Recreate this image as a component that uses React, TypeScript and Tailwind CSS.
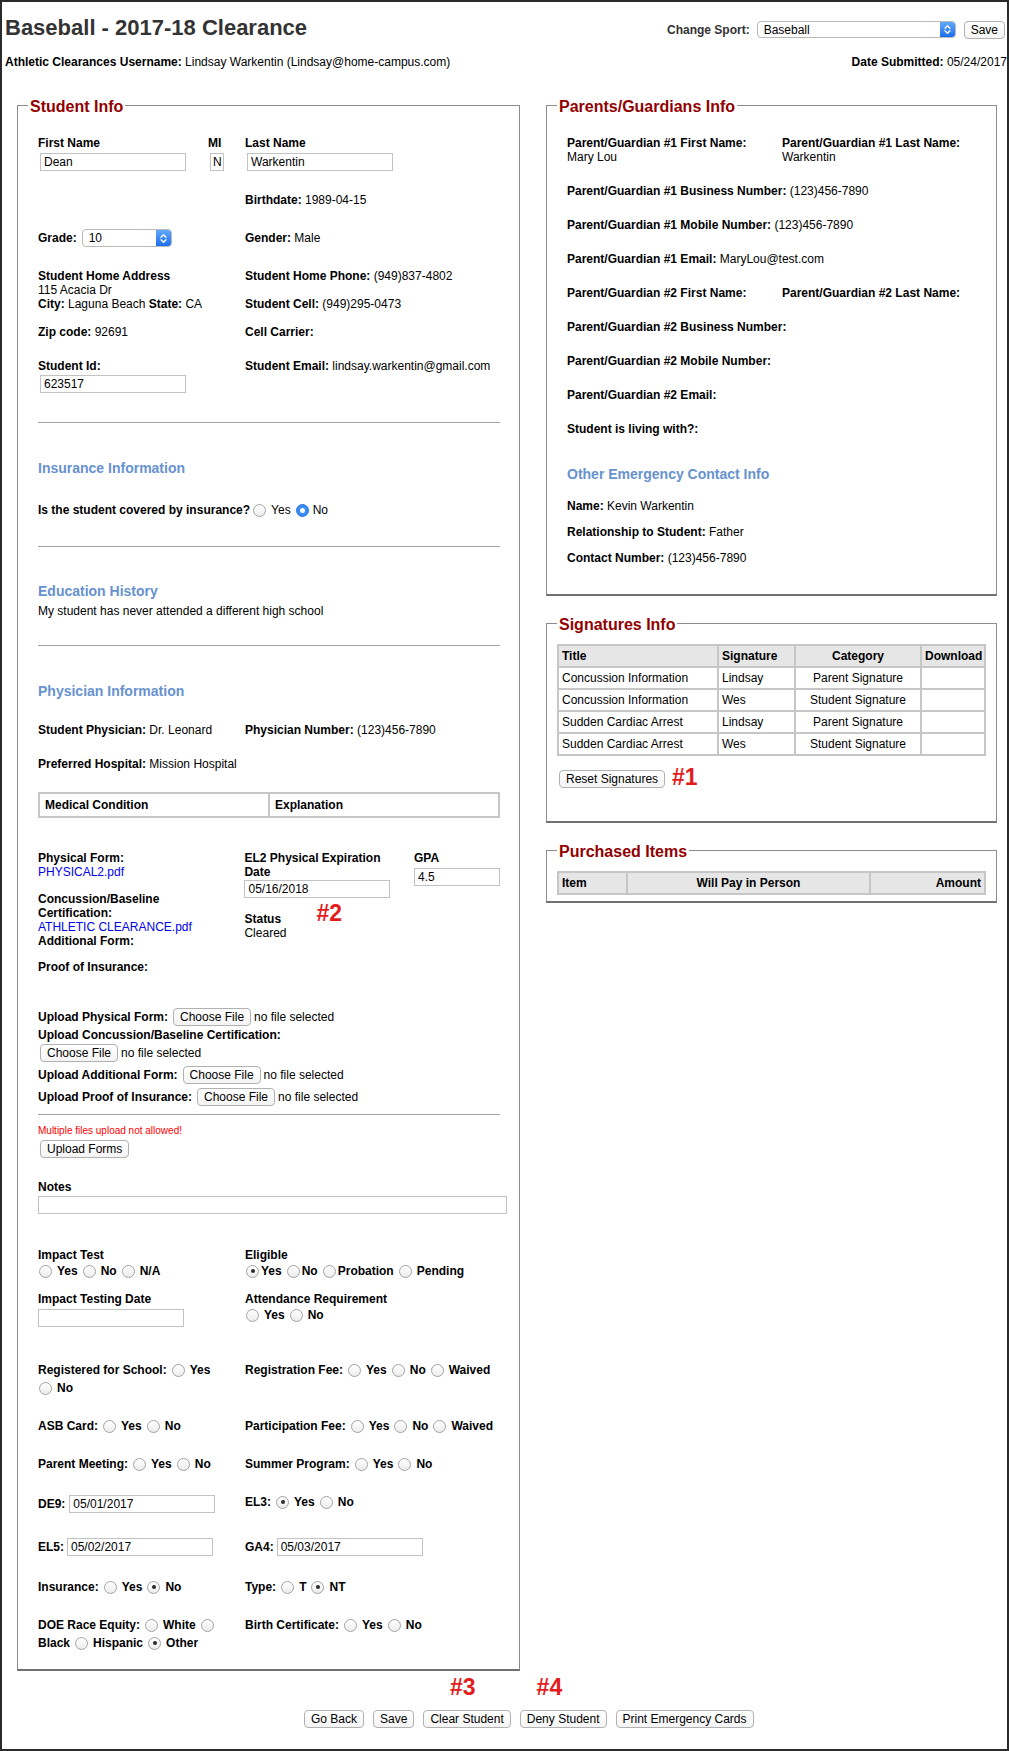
import React from "react";

type RadioProps = { checked?: boolean; blue?: boolean; className?: string };

function Radio({ checked = false, blue = false, className = "" }: RadioProps) {
  if (checked && blue) {
    return (
      <span
        className={`inline-flex items-center justify-center w-[13px] h-[13px] rounded-full bg-[#3b8bf5] border border-[#2a77e0] shrink-0 ${className}`}
      >
        <span className="w-[5px] h-[5px] rounded-full bg-white" />
      </span>
    );
  }
  return (
    <span
      className={`inline-flex items-center justify-center w-[13px] h-[13px] rounded-full border border-[#a3a3a3] bg-gradient-to-b from-white to-[#ececec] shrink-0 ${className}`}
    >
      {checked && <span className="w-[4px] h-[4px] rounded-full bg-[#2a2a2a]" />}
    </span>
  );
}

function Opt({
  label,
  checked = false,
  blue = false,
  rc = "ml-[5px] mr-[5px]",
}: {
  label: string;
  checked?: boolean;
  blue?: boolean;
  rc?: string;
}) {
  return (
    <span className="inline-flex items-center">
      <Radio checked={checked} blue={blue} className={rc} />
      {label}
    </span>
  );
}

function TextInput({
  value = "",
  className = "",
  pad = "pl-[3px]",
}: {
  value?: string;
  className?: string;
  pad?: string;
}) {
  return (
    <input
      readOnly
      value={value}
      className={`block h-[18px] border border-[#c2c2c2] bg-white text-[12px] leading-[14px] text-black outline-none ${pad} ${className}`}
    />
  );
}

function Btn({ children, className = "" }: { children: React.ReactNode; className?: string }) {
  return (
    <button
      type="button"
      className={`inline-flex items-center justify-center h-[18px] px-[6px] border border-[#b1b1b1] rounded-[4px] bg-gradient-to-b from-white to-[#f4f4f4] text-[12px] leading-[14px] text-black whitespace-nowrap ${className}`}
    >
      {children}
    </button>
  );
}

function MacSelect({ value, className = "" }: { value: string; className?: string }) {
  return (
    <div
      className={`flex items-stretch border border-[#b9b9b9] rounded-[4px] bg-white overflow-hidden ${className}`}
    >
      <span className="flex-1 flex items-center pl-[6px] text-[12px] leading-[14px] text-black">{value}</span>
      <span className="w-[15px] flex items-center justify-center bg-gradient-to-b from-[#62a8fb] to-[#1a6ded]">
        <svg width="7" height="11" viewBox="0 0 7 11">
          <path
            d="M1 4.2 L3.5 1.7 L6 4.2 M1 6.8 L3.5 9.3 L6 6.8"
            stroke="white"
            strokeWidth="1.3"
            fill="none"
            strokeLinecap="round"
            strokeLinejoin="round"
          />
        </svg>
      </span>
    </div>
  );
}

function Fieldset({
  title,
  className = "",
  legendClass = "",
  children,
}: {
  title: string;
  className?: string;
  legendClass?: string;
  children: React.ReactNode;
}) {
  return (
    <fieldset
      className={`border border-[#8c8c8c] border-b-2 border-b-[#707070] min-w-0 ${className}`}
    >
      <legend
        className={`px-[2px] pt-[4px] text-[16px] leading-[18px] font-bold text-[#920000] ${legendClass}`}
      >
        {title}
      </legend>
      {children}
    </fieldset>
  );
}

function Heading({ children, className = "" }: { children: React.ReactNode; className?: string }) {
  return (
    <div className={`text-[14px] leading-[16px] font-bold text-[#6792cf] ${className}`}>{children}</div>
  );
}

function Hr({ className = "" }: { className?: string }) {
  return <hr className={`border-0 border-t border-[#a3a3a3] ${className}`} />;
}

const Annot = "font-bold text-[23px] leading-[26px] text-[#e31d1d]";

function StudentInfo() {
  return (
    <Fieldset
      title="Student Info"
      className="w-[503px] pl-[20px] pr-[19px] pt-[20px] pb-[17px]"
      legendClass="-ml-[10px]"
    >
      <div className="flex">
        <div className="w-[170px]">
          <div className="font-bold">First Name</div>
          <TextInput value="Dean" className="mt-[3px] ml-[2px] w-[146px]" />
        </div>
        <div className="w-[37px]">
          <div className="font-bold">MI</div>
          <TextInput value="N" pad="pl-[2px] pr-0" className="mt-[3px] ml-[2px] w-[14px]" />
        </div>
        <div>
          <div className="font-bold">Last Name</div>
          <TextInput value="Warkentin" className="mt-[3px] ml-[2px] w-[146px]" />
        </div>
      </div>

      <div className="grid grid-cols-[207px_1fr] mt-[22px]">
        <div />
        <div>
          <b>Birthdate:</b> 1989-04-15
        </div>
      </div>

      <div className="grid grid-cols-[207px_1fr] mt-[22px] items-center">
        <div className="flex items-center">
          <b>Grade:</b>
          <MacSelect value="10" className="ml-[5px] w-[90px] h-[18px]" />
        </div>
        <div>
          <b>Gender:</b> Male
        </div>
      </div>

      <div className="grid grid-cols-[207px_1fr] mt-[22px]">
        <div>
          <div className="font-bold">Student Home Address</div>
          <div>115 Acacia Dr</div>
          <div>
            <b>City:</b> Laguna Beach <b>State:</b> CA
          </div>
        </div>
        <div>
          <div>
            <b>Student Home Phone:</b> (949)837-4802
          </div>
          <div className="mt-[14px]">
            <b>Student Cell:</b> (949)295-0473
          </div>
        </div>
      </div>

      <div className="grid grid-cols-[207px_1fr] mt-[14px]">
        <div>
          <b>Zip code:</b> 92691
        </div>
        <div>
          <b>Cell Carrier:</b>
        </div>
      </div>

      <div className="grid grid-cols-[207px_1fr] mt-[20px]">
        <div>
          <div className="font-bold">Student Id:</div>
          <TextInput value="623517" className="mt-[2px] ml-[2px] w-[146px]" />
        </div>
        <div>
          <b>Student Email:</b> lindsay.warkentin@gmail.com
        </div>
      </div>

      <Hr className="mt-[29px]" />

      <Heading className="mt-[37px]">Insurance Information</Heading>
      <div className="flex items-center mt-[27px]">
        <b>Is the student covered by insurance?</b>
        <Radio className="ml-[3px] mr-[5px]" />
        Yes
        <Radio checked blue className="ml-[5px] mr-[4px]" />
        No
      </div>

      <Hr className="mt-[29px]" />

      <Heading className="mt-[36px]">Education History</Heading>
      <div className="mt-[5px]">My student has never attended a different high school</div>

      <Hr className="mt-[27px]" />

      <Heading className="mt-[37px]">Physician Information</Heading>
      <div className="grid grid-cols-[207px_1fr] mt-[24px]">
        <div>
          <b>Student Physician:</b> Dr. Leonard
        </div>
        <div>
          <b>Physician Number:</b> (123)456-7890
        </div>
      </div>
      <div className="mt-[20px]">
        <b>Preferred Hospital:</b> Mission Hospital
      </div>

      <table className="mt-[21px] w-[462px] border-separate border-spacing-0 border border-[#c6c6c6]">
        <tbody>
          <tr>
            <td className="w-[230px] border border-[#c6c6c6] pl-[5px] py-[4px] font-bold text-left">
              Medical Condition
            </td>
            <td className="border border-[#c6c6c6] pl-[5px] py-[4px] font-bold text-left">Explanation</td>
          </tr>
        </tbody>
      </table>

      <div className="flex mt-[33px]">
        <div className="w-[207px]">
          <div className="font-bold">Physical Form:</div>
          <div className="text-[#0000ee]">PHYSICAL2.pdf</div>
          <div className="font-bold mt-[13px]">
            Concussion/Baseline
            <br />
            Certification:
          </div>
          <div className="text-[#0000ee]">ATHLETIC CLEARANCE.pdf</div>
          <div className="font-bold">Additional Form:</div>
          <div className="font-bold mt-[12px]">Proof of Insurance:</div>
        </div>
        <div className="w-[170px]">
          <div className="font-bold">
            EL2 Physical Expiration
            <br />
            Date
          </div>
          <TextInput value="05/16/2018" className="mt-[1px] w-[146px]" />
          <div className="flex mt-[14px]">
            <div>
              <div className="font-bold">Status</div>
              <div>Cleared</div>
            </div>
            <span className={`ml-[30px] -mt-[12px] ${Annot}`}>#2</span>
          </div>
        </div>
        <div>
          <div className="font-bold">GPA</div>
          <TextInput value="4.5" className="mt-[3px] w-[86px]" />
        </div>
      </div>

      <div className="flex items-center h-[18px] mt-[34px]">
        <b>Upload Physical Form:</b>
        <Btn className="ml-[5px]">Choose File</Btn>
        <span className="ml-[3px]">no file selected</span>
      </div>
      <div className="font-bold mt-[2px]">Upload Concussion/Baseline Certification:</div>
      <div className="flex items-center h-[18px] mt-[2px]">
        <Btn className="ml-[2px]">Choose File</Btn>
        <span className="ml-[3px]">no file selected</span>
      </div>
      <div className="flex items-center h-[18px] mt-[4px]">
        <b>Upload Additional Form:</b>
        <Btn className="ml-[5px]">Choose File</Btn>
        <span className="ml-[3px]">no file selected</span>
      </div>
      <div className="flex items-center h-[18px] mt-[4px]">
        <b>Upload Proof of Insurance:</b>
        <Btn className="ml-[5px]">Choose File</Btn>
        <span className="ml-[3px]">no file selected</span>
      </div>

      <Hr className="mt-[8px]" />

      <div className="mt-[10px] text-[10px] leading-[12px] text-[#ff0000]">Multiple files upload not allowed!</div>
      <Btn className="mt-[3px] ml-[2px]">Upload Forms</Btn>

      <div className="font-bold mt-[22px]">Notes</div>
      <TextInput className="mt-[2px] w-[469px]" />

      <div className="grid grid-cols-[207px_1fr] mt-[34px] font-bold">
        <div>
          <div>Impact Test</div>
          <div className="flex items-center h-[18px]">
            <Opt label="Yes" rc="ml-[1px] mr-[5px]" />
            <Opt label="No" />
            <Opt label="N/A" />
          </div>
          <div className="mt-[12px]">Impact Testing Date</div>
          <TextInput className="mt-[3px] w-[146px] font-normal" />
        </div>
        <div>
          <div>Eligible</div>
          <div className="flex items-center h-[18px]">
            <Opt label="Yes" checked rc="ml-[1px] mr-[2px]" />
            <Opt label="No" rc="ml-[5px] mr-[2px]" />
            <Opt label="Probation" rc="ml-[5px] mr-[2px]" />
            <Opt label="Pending" />
          </div>
          <div className="mt-[12px]">Attendance Requirement</div>
          <div className="flex items-center h-[18px]">
            <Opt label="Yes" rc="ml-[1px] mr-[5px]" />
            <Opt label="No" />
          </div>
        </div>
      </div>

      <div className="grid grid-cols-[207px_1fr] mt-[34px] font-bold leading-[18px]">
        <div>
          <div className="flex items-center h-[18px]">
            Registered for School:
            <Opt label="Yes" rc="ml-[5px] mr-[5px]" />
          </div>
          <div className="flex items-center h-[18px]">
            <Opt label="No" rc="ml-[1px] mr-[5px]" />
          </div>
        </div>
        <div className="flex items-center h-[18px]">
          Registration Fee:
          <Opt label="Yes" />
          <Opt label="No" />
          <Opt label="Waived" />
        </div>
      </div>

      <div className="grid grid-cols-[207px_1fr] mt-[20px] font-bold">
        <div className="flex items-center h-[18px]">
          ASB Card:
          <Opt label="Yes" />
          <Opt label="No" />
        </div>
        <div className="flex items-center h-[18px]">
          Participation Fee:
          <Opt label="Yes" />
          <Opt label="No" />
          <Opt label="Waived" />
        </div>
      </div>

      <div className="grid grid-cols-[207px_1fr] mt-[20px] font-bold">
        <div className="flex items-center h-[18px]">
          Parent Meeting:
          <Opt label="Yes" />
          <Opt label="No" />
        </div>
        <div className="flex items-center h-[18px]">
          Summer Program:
          <Opt label="Yes" />
          <Opt label="No" />
        </div>
      </div>

      <div className="grid grid-cols-[207px_1fr] mt-[22px] font-bold">
        <div className="flex items-center h-[18px]">
          DE9:
          <TextInput value="05/01/2017" className="ml-[4px] w-[146px] font-normal" />
        </div>
        <div className="flex items-center h-[14px]">
          EL3:
          <Opt label="Yes" checked />
          <Opt label="No" />
        </div>
      </div>

      <div className="grid grid-cols-[207px_1fr] mt-[25px] font-bold">
        <div className="flex items-center h-[18px]">
          EL5:
          <TextInput value="05/02/2017" className="ml-[3px] w-[146px] font-normal" />
        </div>
        <div className="flex items-center h-[18px]">
          GA4:
          <TextInput value="05/03/2017" className="ml-[3px] w-[146px] font-normal" />
        </div>
      </div>

      <div className="grid grid-cols-[207px_1fr] mt-[22px] font-bold">
        <div className="flex items-center h-[18px]">
          Insurance:
          <Opt label="Yes" />
          <Opt label="No" checked />
        </div>
        <div className="flex items-center h-[18px]">
          Type:
          <Opt label="T" />
          <Opt label="NT" checked />
        </div>
      </div>

      <div className="grid grid-cols-[207px_1fr] mt-[20px] font-bold">
        <div>
          <div className="flex items-center h-[18px]">
            DOE Race Equity:
            <Opt label="White" />
            <Radio className="ml-[5px]" />
          </div>
          <div className="flex items-center h-[18px]">
            Black
            <Opt label="Hispanic" />
            <Opt label="Other" checked />
          </div>
        </div>
        <div className="flex items-center h-[18px]">
          Birth Certificate:
          <Opt label="Yes" />
          <Opt label="No" />
        </div>
      </div>
    </Fieldset>
  );
}

function ParentsInfo() {
  return (
    <Fieldset
      title="Parents/Guardians Info"
      className="w-[451px] pl-[20px] pr-[10px] pt-[20px] pb-[29px]"
      legendClass="-ml-[10px]"
    >
      <div className="grid grid-cols-[215px_1fr]">
        <div>
          <div className="font-bold">Parent/Guardian #1 First Name:</div>
          <div>Mary Lou</div>
        </div>
        <div>
          <div className="font-bold">Parent/Guardian #1 Last Name:</div>
          <div>Warkentin</div>
        </div>
      </div>
      <div className="mt-[20px]">
        <b>Parent/Guardian #1 Business Number:</b> (123)456-7890
      </div>
      <div className="mt-[20px]">
        <b>Parent/Guardian #1 Mobile Number:</b> (123)456-7890
      </div>
      <div className="mt-[20px]">
        <b>Parent/Guardian #1 Email:</b> MaryLou@test.com
      </div>
      <div className="grid grid-cols-[215px_1fr] mt-[20px] font-bold">
        <div>Parent/Guardian #2 First Name:</div>
        <div>Parent/Guardian #2 Last Name:</div>
      </div>
      <div className="mt-[20px] font-bold">Parent/Guardian #2 Business Number:</div>
      <div className="mt-[20px] font-bold">Parent/Guardian #2 Mobile Number:</div>
      <div className="mt-[20px] font-bold">Parent/Guardian #2 Email:</div>
      <div className="mt-[20px] font-bold">Student is living with?:</div>

      <Heading className="mt-[30px]">Other Emergency Contact Info</Heading>
      <div className="mt-[17px]">
        <b>Name:</b> Kevin Warkentin
      </div>
      <div className="mt-[12px]">
        <b>Relationship to Student:</b> Father
      </div>
      <div className="mt-[12px]">
        <b>Contact Number:</b> (123)456-7890
      </div>
    </Fieldset>
  );
}

const cell = "border border-[#c6c6c6] py-[3px] leading-[14px]";

function SignaturesInfo() {
  const rows = [
    ["Concussion Information", "Lindsay", "Parent Signature"],
    ["Concussion Information", "Wes", "Student Signature"],
    ["Sudden Cardiac Arrest", "Lindsay", "Parent Signature"],
    ["Sudden Cardiac Arrest", "Wes", "Student Signature"],
  ];
  return (
    <Fieldset title="Signatures Info" className="w-[451px] px-[10px] pt-[10px] pb-[31px] mt-[16px]">
      <table className="w-[429px] table-fixed border-separate border-spacing-0 border border-[#c6c6c6]">
        <colgroup>
          <col className="w-[160px]" />
          <col className="w-[77px]" />
          <col className="w-[126px]" />
          <col className="w-[64px]" />
        </colgroup>
        <thead>
          <tr className="bg-[#e6e6e6] font-bold">
            <th className={`${cell} pl-[3px] text-left`}>Title</th>
            <th className={`${cell} pl-[3px] text-left`}>Signature</th>
            <th className={`${cell} text-center`}>Category</th>
            <th className={`${cell} pl-[3px] text-left`}>Download</th>
          </tr>
        </thead>
        <tbody>
          {rows.map((r, i) => (
            <tr key={i}>
              <td className={`${cell} pl-[3px]`}>{r[0]}</td>
              <td className={`${cell} pl-[3px]`}>{r[1]}</td>
              <td className={`${cell} text-center`}>{r[2]}</td>
              <td className={cell}></td>
            </tr>
          ))}
        </tbody>
      </table>
      <div className="flex items-center mt-[12px]">
        <Btn className="ml-[2px]">Reset Signatures</Btn>
        <span className={`ml-[7px] -mt-[4px] ${Annot}`}>#1</span>
      </div>
    </Fieldset>
  );
}

function PurchasedItems() {
  return (
    <Fieldset title="Purchased Items" className="w-[451px] px-[10px] pt-[10px] pb-[6px] mt-[16px]">
      <table className="w-[429px] table-fixed border-separate border-spacing-0 border border-[#c6c6c6]">
        <colgroup>
          <col className="w-[69px]" />
          <col className="w-[243px]" />
          <col className="w-[115px]" />
        </colgroup>
        <thead>
          <tr className="bg-[#e6e6e6] font-bold">
            <th className={`${cell} pl-[3px] text-left`}>Item</th>
            <th className={`${cell} text-center`}>Will Pay in Person</th>
            <th className={`${cell} pr-[3px] text-right`}>Amount</th>
          </tr>
        </thead>
      </table>
    </Fieldset>
  );
}

export default function App() {
  return (
    <div className="w-[1009px] h-[1751px] border-2 border-[#2b2b2b] bg-white overflow-hidden text-black text-[12px] leading-[14px] font-['Liberation_Sans',Arial,Helvetica,sans-serif]">
      <div className="flex justify-between pl-[3px]">
        <div className="mt-[13px] text-[22px] leading-[26px] font-bold text-[#333333]">
          Baseball - 2017-18 Clearance
        </div>
        <div className="flex items-center mt-[16px] mr-[2px]">
          <b className="text-[#333333]">Change Sport:</b>
          <MacSelect value="Baseball" className="ml-[7px] w-[199px] h-[17px]" />
          <Btn className="ml-[8px] h-[17px]">Save</Btn>
        </div>
      </div>
      <div className="flex justify-between pl-[3px] mt-[14px]">
        <div>
          <b>Athletic Clearances Username:</b> Lindsay Warkentin (Lindsay@home-campus.com)
        </div>
        <div>
          <b>Date Submitted:</b> 05/24/2017
        </div>
      </div>

      <div className="flex items-start mt-[25px] pl-[15px] gap-[26px]">
        <StudentInfo />
        <div className="flex flex-col">
          <ParentsInfo />
          <SignaturesInfo />
          <PurchasedItems />
        </div>
      </div>

      <div className={`flex pl-[448px] mt-[3px] ${Annot}`}>
        <span>#3</span>
        <span className="ml-[61px]">#4</span>
      </div>
      <div className="flex gap-[9px] pl-[302px] mt-[10px]">
        <Btn className="h-[17px]">Go Back</Btn>
        <Btn className="h-[17px]">Save</Btn>
        <Btn className="h-[17px]">Clear Student</Btn>
        <Btn className="h-[17px]">Deny Student</Btn>
        <Btn className="h-[17px]">Print Emergency Cards</Btn>
      </div>
    </div>
  );
}
